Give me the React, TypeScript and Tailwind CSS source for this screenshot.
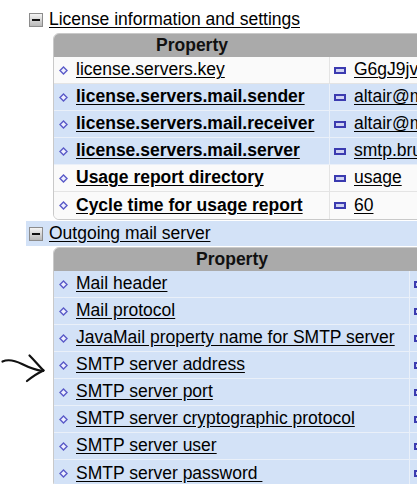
type Row = {
  label: string;
  value?: string;
  bold?: boolean;
  tone: "white" | "blue";
};

const LICENSE_ROWS: Row[] = [
  { label: "license.servers.key", value: "G6gJ9jvK2pQ8", tone: "white" },
  { label: "license.servers.mail.sender", value: "altair@mail.com", bold: true, tone: "blue" },
  { label: "license.servers.mail.receiver", value: "altair@mail.com", bold: true, tone: "blue" },
  { label: "license.servers.mail.server", value: "smtp.bruker.com", bold: true, tone: "blue" },
  { label: "Usage report directory", value: "usage", bold: true, tone: "white" },
  { label: "Cycle time for usage report", value: "60", bold: true, tone: "white" },
];

const MAIL_ROWS: Row[] = [
  { label: "Mail header", tone: "blue" },
  { label: "Mail protocol", tone: "blue" },
  { label: "JavaMail property name for SMTP server", tone: "blue" },
  { label: "SMTP server address", tone: "blue" },
  { label: "SMTP server port", tone: "blue" },
  { label: "SMTP server cryptographic protocol", tone: "blue" },
  { label: "SMTP server user", tone: "blue" },
  { label: "SMTP server password\u00a0", tone: "blue" },
];

function MinusBox() {
  return (
    <span className="flex h-[14px] w-[14px] shrink-0 items-center justify-center border border-[#8c8c8c] bg-gradient-to-b from-[#f4f4f4] to-[#b9b9b9]">
      <span className="h-[2px] w-[8px] bg-[#111]" />
    </span>
  );
}

function Diamond() {
  return (
    <svg width="9" height="9" viewBox="0 0 9 9" className="shrink-0">
      <polygon points="4.5,1 8,4.5 4.5,8 1,4.5" fill="#eef0ff" stroke="#5a5ac8" strokeWidth="1.4" />
    </svg>
  );
}

function ValueIcon() {
  return <span className="h-[7px] w-[12px] shrink-0 border-2 border-[#3b3bb0] bg-[#cfd3f3]" />;
}

function SectionHeader({ title, highlighted }: { title: string; highlighted?: boolean }) {
  return (
    <div
      className={`ml-[26px] flex h-[25px] items-center gap-[6px] pl-[3px] ${highlighted ? "bg-[#d3e2f7]" : ""}`}
    >
      <MinusBox />
      <span className="underline underline-offset-[2px]">{title}</span>
    </div>
  );
}

function PropertyTable({ rows, firstColClass }: { rows: Row[]; firstColClass: string }) {
  return (
    <div className="ml-[53px] w-[760px] overflow-hidden rounded-[6px] border border-[#c9c9c9]">
      <div className="flex h-[23px] bg-[#aaaaaa] font-bold text-[#111]">
        <div className={`flex items-center justify-center ${firstColClass}`}>Property</div>
        <div className="flex flex-1 items-center justify-center">Value</div>
      </div>
      {rows.map((row, i) => {
        const blue = row.tone === "blue";
        const last = i === rows.length - 1;
        return (
          <div
            key={row.label}
            className={`flex h-[27px] ${blue ? "bg-[#d3e2f7]" : "bg-[#fafafa]"} ${
              last ? "" : blue ? "border-b border-[#eaf0f9]" : "border-b border-[#e4e4e4]"
            }`}
          >
            <div
              className={`flex items-center gap-[8px] pl-[5px] ${firstColClass} border-r ${
                blue ? "border-[#eaf0f9]" : "border-[#e4e4e4]"
              }`}
            >
              <Diamond />
              <span className={`whitespace-pre underline underline-offset-[2px] ${row.bold ? "font-bold" : ""}`}>
                {row.label}
              </span>
            </div>
            <div className="flex flex-1 items-center gap-[8px] pl-[4px]">
              <ValueIcon />
              {row.value ? <span className="underline underline-offset-[2px]">{row.value}</span> : null}
            </div>
          </div>
        );
      })}
    </div>
  );
}

function Arrow() {
  return (
    <svg
      width="50"
      height="34"
      viewBox="0 0 50 34"
      className="pointer-events-none absolute left-0 top-[352px]"
      fill="none"
      stroke="#111"
      strokeWidth="2.2"
      strokeLinecap="round"
      strokeLinejoin="round"
    >
      <path d="M2.5 9.5 C 8 7, 14 8, 22 12 S 36 18, 43 19" />
      <path d="M29.5 3.5 C 35 9, 39 14, 43.5 18.5" />
      <path d="M43.5 18.5 C 38 21, 32 25, 27 29" />
    </svg>
  );
}

export default function App() {
  return (
    <div className="relative h-[484px] w-[417px] overflow-hidden bg-white font-['Liberation_Sans',Arial,sans-serif] text-[17.5px] leading-none text-black">
      <div className="-mt-[22px]">
        <SectionHeader title="Other settings" />
      </div>
      <div className="h-[4px]" />
      <SectionHeader title="License information and settings" />
      <div className="h-[1px]" />
      <PropertyTable rows={LICENSE_ROWS} firstColClass="w-[276px] shrink-0" />
      <div className="h-[1px]" />
      <SectionHeader title="Outgoing mail server" highlighted />
      <div className="h-[1px]" />
      <PropertyTable rows={MAIL_ROWS} firstColClass="w-[356px] shrink-0" />
      <Arrow />
    </div>
  );
}
